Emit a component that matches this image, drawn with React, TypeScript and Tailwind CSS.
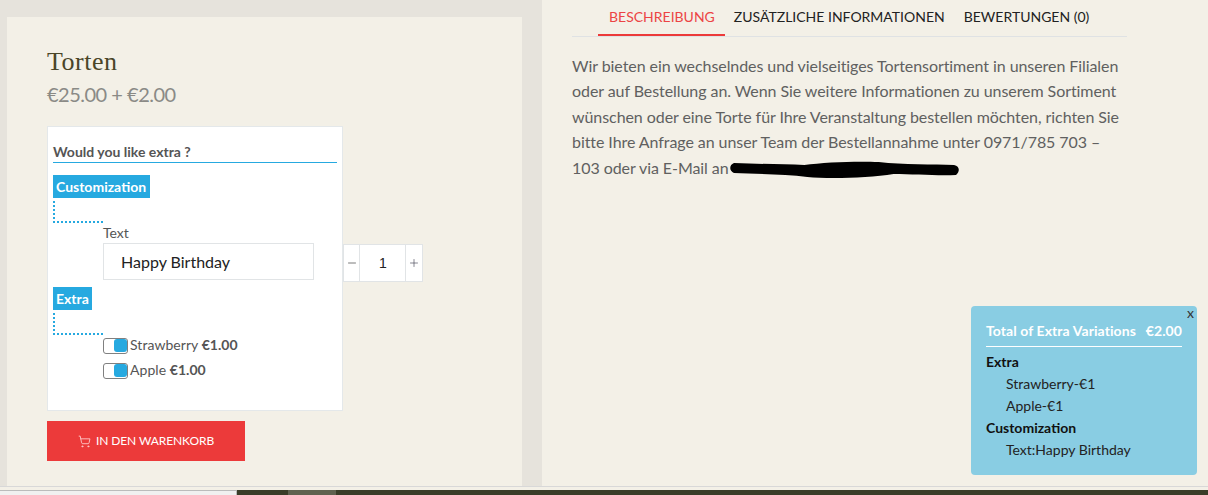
import { Minus, Plus, ShoppingCart } from "lucide-react";

const lato = "font-['Lato','Liberation_Sans',sans-serif]";

const Connector = () => (
  <div className="mt-[3px] h-[22px] w-[50px] border-b-[2px] border-l-[2px] border-dotted border-[#26a9e0]" />
);

const Toggle = ({ label, price }: { label: string; price: string }) => (
  <div className="flex h-[25px] items-center pl-[50px]">
    <div className="flex h-[16px] w-[25px] items-center justify-end rounded-[3px] border border-[#808080] bg-white">
      <div className="h-[13px] w-[13px] rounded-[3px] bg-[#26a9e0]" />
    </div>
    <span className="mb-[2px] ml-[2px] text-[14px] leading-none tracking-[0.05px] text-[#555]">
      {label} <b className="font-bold">{price}</b>
    </span>
  </div>
);

const PopupRow = ({ children, bold }: { children: string; bold?: boolean }) => (
  <div className={bold ? "h-[22px] text-[14px] leading-[22px] font-bold text-[#111]" : "h-[22px] pl-[20px] text-[14px] leading-[22px] text-[#222]"}>
    {children}
  </div>
);

export default function App() {
  return (
    <div className={`${lato} relative flex h-[495px] w-[1208px] flex-col overflow-hidden bg-[#f3f0e7]`}>
      <div className="flex h-[486px] bg-[#e6e3dc] pl-[7px]">
        {/* product panel */}
        <div className="mt-[17px] w-[515px] bg-[#f3f0e7] pl-[40px] pt-[30px]">
          <h1 className="font-['Liberation_Serif',serif] text-[26px] leading-[30px] tracking-[0.5px] text-[#4a4528]">Torten</h1>
          <p className="mt-[4px] text-[20px] leading-[26px] tracking-[-0.5px] text-[#8a8a86]">€25.00 + €2.00</p>

          <div className="mt-[19px] flex items-start">
            <div className="h-[285px] w-[296px] border border-[#e4e8ea] bg-white px-[5px] pt-[16px]">
              <div className="h-[20px] border-b border-[#26a9e0] text-[14px] leading-[18px] font-bold text-[#555]">Would you like extra ?</div>
              <div className="mt-[12px] inline-block h-[23px] bg-[#26a9e0] pl-[3px] pr-[4px] align-top text-[14px] leading-[23px] font-bold text-white">Customization</div>
              <Connector />
              <div className="pl-[50px]">
                <div className="mt-[1px] text-[14px] leading-[18px] text-[#555]">Text</div>
                <div className="mt-[1px] flex h-[37px] w-[211px] items-center border border-[#e1e4e6] pl-[17px] text-[16px] text-[#222]">Happy Birthday</div>
              </div>
              <div className="mt-[7px] inline-block h-[23px] bg-[#26a9e0] px-[3px] align-top text-[14px] leading-[23px] font-bold text-white">Extra</div>
              <Connector />
              <div className="mt-[-2px]">
                <Toggle label="Strawberry" price="€1.00" />
                <Toggle label="Apple" price="€1.00" />
              </div>
            </div>

            <div className="mt-[118px] flex h-[38px] w-[80px] border border-[#e1e4e6] bg-white">
              <div className="flex w-[16px] items-center justify-center border-r border-[#e1e4e6] text-[#333]">
                <Minus size={12} strokeWidth={1.3} />
              </div>
              <div className="flex flex-1 items-center justify-center pl-[1px] font-['Liberation_Sans',sans-serif] text-[14px] text-[#222]">1</div>
              <div className="flex w-[17px] items-center justify-center border-l border-[#e1e4e6] text-[#445]">
                <Plus size={12} strokeWidth={1.3} />
              </div>
            </div>
          </div>

          <button className="mt-[10px] flex h-[40px] w-[198px] items-center justify-center gap-[5px] bg-[#ec3a3a] text-[12px] tracking-[-0.1px] text-white">
            <ShoppingCart size={13} strokeWidth={1.5} className="text-[#ffd6d6]" />
            IN DEN WARENKORB
          </button>
        </div>

        {/* description panel */}
        <div className="ml-[20px] flex-1 bg-[#f3f0e7] pl-[30px] pr-[81px]">
          <div className="flex h-[37px] border-b border-[#dfe2e4] pl-[26px] text-[14px] text-[#222]">
            <div className="h-[36px] border-b-2 border-[#ec3a3a] pl-[11px] pr-[10px] pt-[6px] text-[#ec4444]">BESCHREIBUNG</div>
            <div className="ml-[9px] pt-[6px]">ZUSÄTZLICHE INFORMATIONEN</div>
            <div className="ml-[19px] pt-[6px]">BEWERTUNGEN (0)</div>
          </div>
          <div className="mt-[15.5px] text-[16px] leading-[25.6px] tracking-[-0.07px] text-[#606060]">
            <p>Wir bieten ein wechselndes und vielseitiges Tortensortiment in unseren Filialen</p>
            <p>oder auf Bestellung an. Wenn Sie weitere Informationen zu unserem Sortiment</p>
            <p>wünschen oder eine Torte für Ihre Veranstaltung bestellen möchten, richten Sie</p>
            <p>bitte Ihre Anfrage an unser Team der Bestellannahme unter 0971/785 703 –</p>
            <p className="flex items-center">
              103 oder via E-Mail an
              <svg width="230" height="18" viewBox="0 0 232 18" className="ml-[1px] mt-[4px]">
                <path d="M4 2 C30 3 55 3 75 4 C95 1 130 0 150 1 C175 4 205 3 226 4 C232 5 232 11 228 14 C210 15 185 13 165 13 C140 17 100 18 78 16 C55 13 25 13 4 12 C-1 10 -1 4 4 2 Z" fill="#000" />
              </svg>
            </p>
          </div>
        </div>
      </div>

      {/* browser edge */}
      <div className="h-[4px] border-t border-[#d8d8d8] bg-[#f3f0e7]" />
      <div className="flex h-[5px] bg-[#3a3d28]">
        <div className="w-[237px] border-t border-r border-[#bbb] bg-[#f0f0f0]" />
        <div className="ml-[51px] w-[48px] bg-[#60624f]" />
      </div>

      {/* floating totals */}
      <div className="absolute left-[971px] top-[306px] h-[169px] w-[226px] rounded-[4px] bg-[#89cde3] px-[15px] pt-[16px]">
        <span className="absolute right-[3px] top-[-1px] text-[14px] leading-[16px] text-[#333]">x</span>
        <div className="flex h-[25px] justify-between border-b border-white text-[14px] leading-[18px] font-bold tracking-[0.08px] text-white">
          <span>Total of Extra Variations</span>
          <span>€2.00</span>
        </div>
        <div className="mt-[4px]">
          <PopupRow bold>Extra</PopupRow>
          <PopupRow>Strawberry-€1</PopupRow>
          <PopupRow>Apple-€1</PopupRow>
          <PopupRow bold>Customization</PopupRow>
          <PopupRow>Text:Happy Birthday</PopupRow>
        </div>
      </div>
    </div>
  );
}
